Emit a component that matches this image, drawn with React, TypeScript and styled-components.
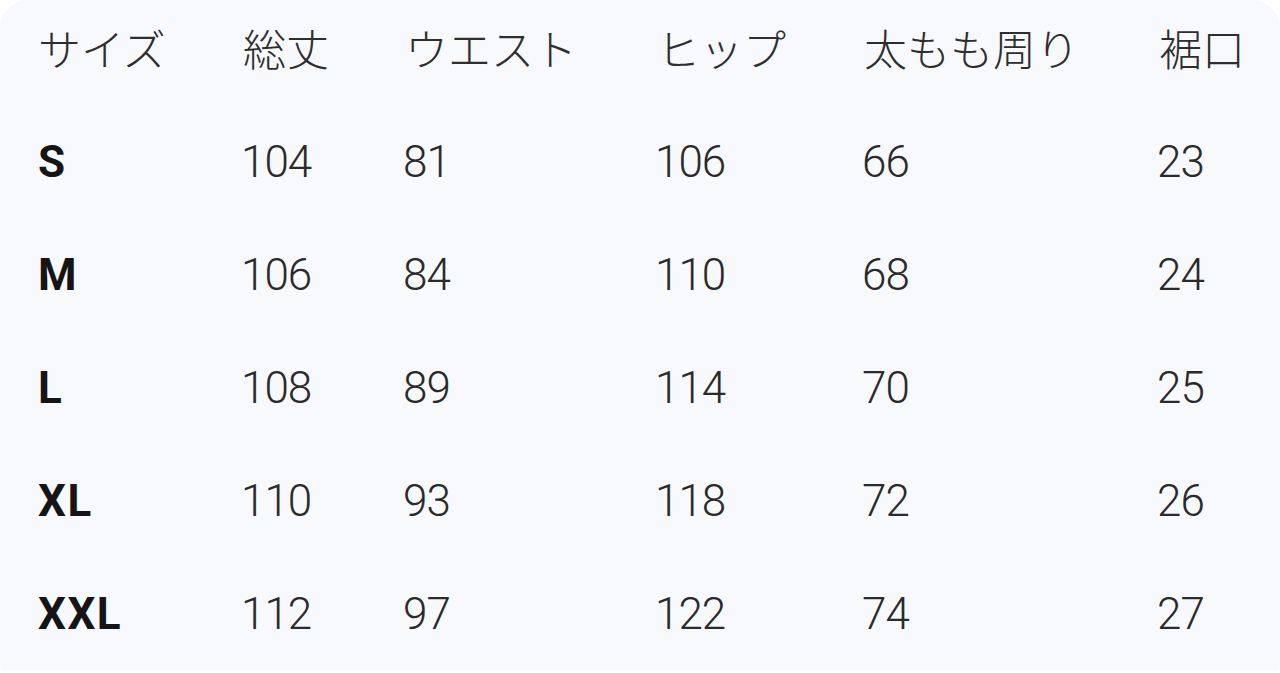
import React from 'react'
import styled, { createGlobalStyle } from 'styled-components'

const GlobalStyle = createGlobalStyle`
  html, body {
    margin: 0;
    padding: 0;
    background: #ffffff;
  }
`

const headers = ['サイズ', '総丈', 'ウエスト', 'ヒップ', '太もも周り', '裾口']

const rows = [
  ['S', '104', '81', '106', '66', '23'],
  ['M', '106', '84', '110', '68', '24'],
  ['L', '108', '89', '114', '70', '25'],
  ['XL', '110', '93', '118', '72', '26'],
  ['XXL', '112', '97', '122', '74', '27'],
]

const App = () => {
  return (
    <>
      <GlobalStyle />
      <Panel>
        <Table>
          <HeadRow>
            {headers.map((h) => (
              <HeadCell key={h}>{h}</HeadCell>
            ))}
          </HeadRow>
          {rows.map((r) => (
            <Row key={r[0]}>
              {r.map((v, i) => (
                <Cell key={i} $label={i === 0}>
                  {v}
                </Cell>
              ))}
            </Row>
          ))}
        </Table>
      </Panel>
    </>
  )
}

export default App

const Panel = styled.div`
  width: 1280px;
  height: 670px;
  box-sizing: border-box;
  background-color: #f8f9fd;
  border-radius: 28px 28px 4px 4px;
  overflow: hidden;
  padding-left: 38px;
`

const Table = styled.div`
  display: flex;
  flex-direction: column;
`

const HeadRow = styled.div`
  display: grid;
  grid-template-columns: 205px 162px 252px 207px 295px 1fr;
  height: 105px;
  padding-top: 23px;
  box-sizing: border-box;
`

const HeadCell = styled.div`
  font-family: "Noto Sans CJK JP", "Noto Sans", sans-serif;
  font-size: 43px;
  font-weight: 300;
  line-height: 48px;
  color: #2e2e2e;
  white-space: nowrap;
`

const Row = styled.div`
  display: grid;
  grid-template-columns: 205px 162px 252px 207px 295px 1fr;
  height: 113px;
  align-items: center;
`

const Cell = styled.div<{ $label?: boolean }>`
  font-family: Roboto, "Noto Sans", sans-serif;
  font-size: 44px;
  line-height: 48px;
  font-weight: ${(p) => (p.$label ? 700 : 300)};
  color: ${(p) => (p.$label ? '#151515' : '#2a2a2a')};
  letter-spacing: ${(p) => (p.$label ? '1.5px' : '-1px')};
  margin-left: ${(p) => (p.$label ? '0' : '-2px')};
  white-space: nowrap;
`
